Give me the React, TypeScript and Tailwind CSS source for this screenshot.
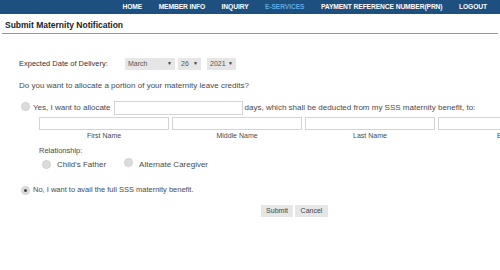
import React from "react";

const font = { fontFamily: '"Liberation Sans", Arial, sans-serif' };

function Radio({ checked = false }: { checked?: boolean }) {
  return (
    <span className="inline-flex h-[9px] w-[9px] shrink-0 items-center justify-center rounded-full bg-[#dcdcdc] border border-[#d0d0d0]">
      {checked && <span className="h-[3px] w-[3px] rounded-full bg-[#444]" />}
    </span>
  );
}

function Select({ label, w }: { label: string; w: string }) {
  return (
    <div className={`flex h-[12px] items-center justify-between bg-[#e6e6e6] pl-[3px] pr-[3px] text-[7px] text-[#555] ${w}`}>
      <span>{label}</span>
      <span className="text-[5px] text-[#333]">▼</span>
    </div>
  );
}

export default function App() {
  const nav = ["HOME", "MEMBER INFO", "INQUIRY", "E-SERVICES", "PAYMENT REFERENCE NUMBER(PRN)", "LOGOUT"];
  return (
    <div className="h-[270px] w-[500px] overflow-hidden bg-white text-[#4a4a4a]" style={font}>
      <div className="flex h-[14px] items-center justify-end gap-[16.5px] bg-[#1d4f7f] pr-[13px]">
        {nav.map((n) => (
          <span key={n} className={`text-[6.7px] font-bold tracking-[-0.1px] ${n === "E-SERVICES" ? "text-[#5fa8e0]" : "text-white"}`}>
            {n}
          </span>
        ))}
      </div>
      <div className="mx-[2px] mt-[5px] border-b border-[#8797a6] pb-[2px] pl-[3px] text-[8.5px] font-bold leading-[12px] text-[#222]">
        Submit Maternity Notification
      </div>
      <div className="pl-[19px] pt-[24px] text-[8px]">
        <div className="flex h-[12px] items-center">
          <span className="w-[106px] text-[7.5px] text-[#333]">Expected Date of Delivery:</span>
          <Select label="March" w="w-[50px]" />
          <div className="ml-[3px]"><Select label="26" w="w-[23px]" /></div>
          <div className="ml-[6px]"><Select label="2021" w="w-[29px]" /></div>
        </div>
        <div className="mt-[11px] leading-[10px]">Do you want to allocate a portion of your maternity leave credits?</div>
        <div className="mt-[10px] flex h-[14px] items-center">
          <span className="ml-[2px]"><Radio /></span>
          <span className="ml-[3px] whitespace-nowrap">Yes, I want to allocate</span>
          <div className="ml-[3px] h-[14px] w-[129px] shrink-0 border border-[#d4d4d4] bg-white" />
          <span className="ml-[2px] whitespace-nowrap">days, which shall be deducted from my SSS maternity benefit, to:</span>
        </div>
        <div className="ml-[20px] mt-[2px] flex gap-[3px]">
          {["First Name", "Middle Name", "Last Name", "Ext."].map((l) => (
            <div key={l} className="flex w-[130px] shrink-0 flex-col items-center">
              <div className="h-[13px] w-full border border-[#d4d4d4] bg-white" />
              <span className="mt-[1px] text-[7px] leading-[9px]">{l}</span>
            </div>
          ))}
        </div>
        <div className="ml-[20px] mt-[6px] text-[7.5px] leading-[10px]">Relationship:</div>
        <div className="ml-[23px] mt-[2px] flex items-center">
          <Radio />
          <span className="ml-[6px]">Child's Father</span>
          <span className="ml-[18px]"><Radio /></span>
          <span className="ml-[6px]">Alternate Caregiver</span>
        </div>
        <div className="mt-[13px] flex items-center">
          <span className="ml-[2px]"><Radio checked /></span>
          <span className="ml-[3px] text-[7.5px]">No, I want to avail the full SSS maternity benefit.</span>
        </div>
        <div className="mt-[9px] flex gap-[2px] pl-[242px]">
          <button className="h-[12px] w-[32px] bg-[#e6e6e6] text-[7px] leading-[12px] text-[#444]">Submit</button>
          <button className="h-[12px] w-[33px] bg-[#e6e6e6] text-[7px] leading-[12px] text-[#444]">Cancel</button>
        </div>
      </div>
    </div>
  );
}
